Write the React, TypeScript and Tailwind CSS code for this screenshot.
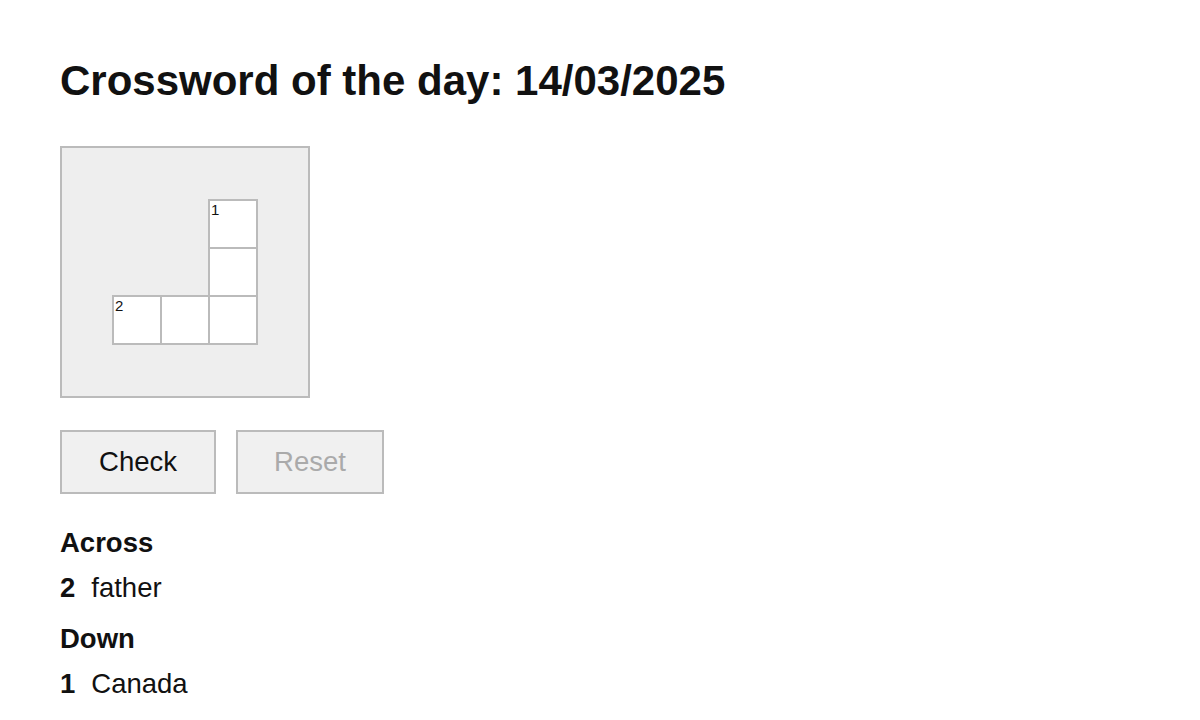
import { useState } from "react";

const SIZE = 5;
// white cells of the grid, with clue numbers where a word starts
const cells: { r: number; c: number; n?: number }[] = [
  { r: 1, c: 3, n: 1 },
  { r: 2, c: 3 },
  { r: 3, c: 1, n: 2 },
  { r: 3, c: 2 },
  { r: 3, c: 3 },
];

const Cell = ({ cell }: any) => {
  if (!cell) return <div />;
  return (
    <div className="relative">
      <div className="absolute left-0 top-0 w-[50px] h-[50px] border-2 border-[#bbbbbb] bg-white z-10">
        {cell.n && (
          <span className="absolute left-[1px] top-0 text-[15px] leading-[17px] text-[#111]">
            {cell.n}
          </span>
        )}
      </div>
    </div>
  );
};

const App = () => {
  const [letters] = useState<Record<string, string>>({});

  const grid = [];
  for (let r = 0; r < SIZE; r++) {
    for (let c = 0; c < SIZE; c++) {
      const cell = cells.find((x) => x.r === r && x.c === c);
      grid.push(<Cell key={`${r}-${c}`} cell={cell} value={letters[`${r}-${c}`]} />);
    }
  }

  return (
    <div
      className="min-h-[720px] bg-white pl-[60px] pt-[57px] text-[#111]"
      style={{ fontFamily: '"Liberation Sans", Arial, sans-serif' }}
    >
      <h1 className="text-[42px] leading-[48px] font-bold">Crossword of the day: 14/03/2025</h1>

      <div className="mt-[41px] w-[250px] h-[252px] border-2 border-[#bbbbbb] bg-[#eeeeee] pl-[2px] pt-[3px]">
        <div className="grid grid-cols-[repeat(5,48px)] grid-rows-[repeat(5,48px)]">{grid}</div>
      </div>

      <div className="mt-[32px] flex gap-[20px]">
        <button className="w-[156px] h-[64px] border-2 border-[#bbbbbb] bg-[#f0f0f0] text-[27.5px] text-[#111]">
          Check
        </button>
        <button
          disabled
          className="w-[148px] h-[64px] border-2 border-[#bbbbbb] bg-[#f0f0f0] text-[27.5px] text-[#aaaaaa]"
        >
          Reset
        </button>
      </div>

      <div className="mt-[33px] text-[27.5px] leading-[31px]">
        <div className="font-bold">Across</div>
        <div className="mt-[14px] flex">
          <span className="font-bold mr-[16px]">2</span>
          <span>father</span>
        </div>
        <div className="mt-[20px] font-bold">Down</div>
        <div className="mt-[14px] flex">
          <span className="font-bold mr-[16px]">1</span>
          <span>Canada</span>
        </div>
      </div>
    </div>
  );
};

export default App;
